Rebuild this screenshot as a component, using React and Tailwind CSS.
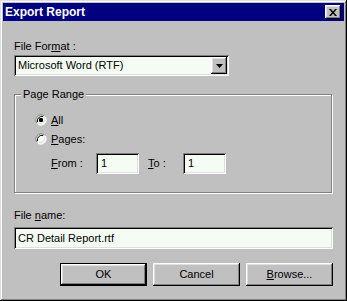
import React from 'react';

const raised = 'shadow-[inset_-1px_-1px_#000,inset_1px_1px_#fff,inset_-2px_-2px_#808080,inset_2px_2px_#dfdfdf]';
const sunken = 'shadow-[inset_1px_1px_#808080,inset_-1px_-1px_#fff,inset_2px_2px_#000,inset_-2px_-2px_#dfdfdf]';

function Radio({ checked }) {
  return (
    <svg width="12" height="12" viewBox="0 0 12 12" className="shrink-0">
      <circle cx="6" cy="6" r="5" fill="#f4fcf4" />
      <path d="M1.5 9 A5.5 5.5 0 0 1 9 1.5" stroke="#808080" strokeWidth="1" fill="none" />
      <path d="M2.6 8.2 A4.4 4.4 0 0 1 8.2 2.6" stroke="#000" strokeWidth="1" fill="none" />
      <path d="M10.5 3 A5.5 5.5 0 0 1 3 10.5" stroke="#fff" strokeWidth="1" fill="none" />
      <path d="M9.4 3.8 A4.4 4.4 0 0 1 3.8 9.4" stroke="#dfdfdf" strokeWidth="1" fill="none" />
      {checked && <rect x="4" y="4" width="4" height="4" rx="1.2" fill="#000" />}
    </svg>
  );
}

function Button({ children, isDefault }) {
  return (
    <div className={`w-[87px] h-[23px] ${isDefault ? 'border border-black' : ''}`}>
      <div className={`w-full h-full flex items-center justify-center ${raised}`}>
        {children}
      </div>
    </div>
  );
}

export default function App() {
  return (
    <div
      className="w-[347px] h-[301px] bg-[#c0c0c0] p-[3px] flex flex-col text-[11px] leading-[13px] text-black shadow-[inset_-1px_-1px_#000,inset_1px_1px_#dfdfdf,inset_-2px_-2px_#808080,inset_2px_2px_#fff]"
      style={{ fontFamily: '"Liberation Sans", Arial, sans-serif' }}
    >
      {/* title bar */}
      <div className="h-[18px] bg-[#000080] flex items-center justify-between pl-[2px] pr-[3px]">
        <span className="text-white font-bold text-[12px]">Export Report</span>
        <div className={`w-[16px] h-[14px] bg-[#c0c0c0] flex items-center justify-center ${raised}`}>
          <svg width="8" height="7" viewBox="0 0 8 7">
            <path d="M0 0h2l2 2.5L6 0h2L5 3.5 8 7H6L4 4.5 2 7H0l3-3.5z" fill="#000" />
          </svg>
        </div>
      </div>

      <div className="px-[11px] pt-[19px] flex flex-col">
        <div>File For<span className="underline">m</span>at :</div>

        <div className={`mt-[2px] w-[215px] h-[21px] bg-[#f4fcf4] flex items-center justify-between pl-[4px] pr-[2px] ${sunken}`}>
          <span>Microsoft Word (RTF)</span>
          <div className={`w-[16px] h-[17px] bg-[#c0c0c0] flex items-center justify-center ${raised}`}>
            <svg width="7" height="4" viewBox="0 0 7 4">
              <path d="M0 0h7L3.5 4z" fill="#000" />
            </svg>
          </div>
        </div>

        {/* page range group */}
        <div className="relative mt-[18px] w-[318px] h-[99px] border border-[#808080] shadow-[1px_1px_0_#fff,inset_1px_1px_0_#fff] pt-[18px] pl-[20px]">
          <span className="absolute left-[6px] top-[-7px] px-[2px] bg-[#c0c0c0]">Page Range</span>
          <div className="flex flex-col gap-[5px]">
            <div className="flex items-center gap-[4px] h-[14px]">
              <Radio checked />
              <span><span className="underline">A</span>ll</span>
            </div>
            <div className="flex items-center gap-[4px] h-[14px]">
              <Radio />
              <span><span className="underline">P</span>ages:</span>
            </div>
          </div>
          <div className="flex items-center mt-[7px] pl-[16px] h-[21px]">
            <span className="w-[45px]"><span className="underline">F</span>rom :</span>
            <div className={`w-[43px] h-[21px] bg-[#f4fcf4] pl-[5px] flex items-center ${sunken}`}>1</div>
            <span className="ml-[9px] w-[35px]"><span className="underline">T</span>o :</span>
            <div className={`w-[43px] h-[21px] bg-[#f4fcf4] pl-[5px] flex items-center ${sunken}`}>1</div>
          </div>
        </div>

        <div className="mt-[16px]">File <span className="underline">n</span>ame:</div>
        <div className={`mt-[5px] h-[22px] bg-[#f4fcf4] flex items-center pl-[4px] ${sunken}`}>CR Detail Report.rtf</div>

        <div className="mt-[14px] flex justify-end gap-[6px]">
          <Button isDefault>OK</Button>
          <Button>Cancel</Button>
          <Button><span><span className="underline">B</span>rowse...</span></Button>
        </div>
      </div>
    </div>
  );
}
